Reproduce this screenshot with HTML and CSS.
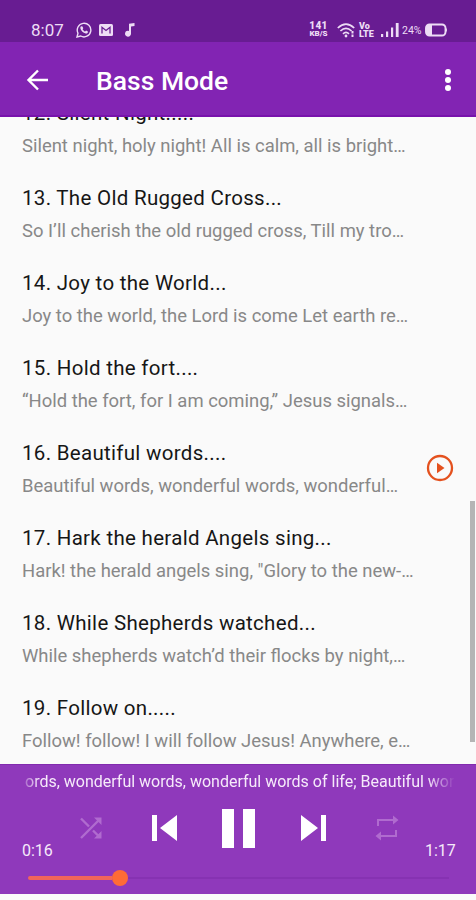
FILE: index.html
```html
<!DOCTYPE html>
<html lang="en">
<head>
<meta charset="utf-8">
<title>Bass Mode</title>
<link rel="stylesheet" href="styles.css">
</head>
<body>
<div class="screen">
  <header class="status">
    <span class="clock">8:07</span>
    <svg class="whatsapp" width="16" height="16" viewBox="0 0 16 16"><path d="M1 15l1-3.8A6.8 6.8 0 1 1 4.7 14z" fill="none" stroke="currentColor" stroke-width="1.4"/><path d="M5.2 4.3l1.3.1.8 1.8-.7 1c.6 1.1 1.3 1.8 2.5 2.3l1-.9 1.8.9c.2 1.5-1 2.2-2.1 2-2.7-.6-5.2-3-5.5-5.4 0-.7.4-1.5.9-1.8z" fill="currentColor"/></svg>
    <svg class="mail" width="14" height="12" viewBox="0 0 14 12"><rect width="14" height="12" rx="1.5" fill="currentColor"/><path d="M3 9.500V3.300L7 6.500l4-3.200v6.200" fill="none" stroke="#681c92" stroke-width="1.300"/></svg>
    <svg class="note" width="10" height="14" viewBox="0 0 10 14"><path d="M4 .8L9.500 0v3L6 3.500V10.500A3 3 0 1 1 4 7.900z" fill="currentColor"/></svg>
    <span class="spacer"></span>
    <span class="speed"><b>141</b><small>KB/S</small></span>
    <svg class="wifi" width="19" height="15" viewBox="0 0 19 15"><g fill="none" stroke="currentColor" stroke-width="1.700"><path d="M.8 5Q9-2.800 17.200 5M3.400 8Q9 2.600 14.600 8M6 10.800Q9 8 12 10.800"/></g><circle cx="9" cy="13" r="1.400" fill="currentColor"/><path d="M15.500 8v2.500M15.500 11.500v2.500" fill="none" stroke="currentColor" stroke-width="2"/></svg>
    <span class="volte"><b>Vo</b><small>LTE</small></span>
    <svg class="signal" width="18" height="14" viewBox="0 0 18 14" fill="currentColor"><path d="M0 11h2.200v3H0zM5 8.500h2.200V14H5zM10 4.500h2.200V14H10zM14.800 0h2.800v14h-2.800z"/></svg>
    <span class="percent">24%</span>
    <svg class="battery" width="23" height="14" viewBox="0 0 23 14"><rect x="1" y="1.500" width="19.500" height="11" rx="3.500" fill="none" stroke="currentColor" stroke-width="1.900"/><path d="M4 1.500h3v11H4Q1 12 1 7t3-5.500zM21 5q2 2 0 4z" fill="currentColor"/></svg>
  </header>
  <nav class="appbar">
    <svg class="back" width="23" height="22" viewBox="0 0 23 22"><path d="M12 1.500L2.500 11l9.500 9.500M2 11h20" fill="none" stroke="#fff" stroke-width="2.400"/></svg>
    <h1>Bass Mode</h1>
    <svg class="more" width="8" height="24" viewBox="0 0 8 24" fill="#fff"><circle cx="4" cy="4" r="3"/><circle cx="4" cy="12" r="3"/><circle cx="4" cy="20" r="3"/></svg>
  </nav>
  <main class="list">
    <article class="row"><h2>12. Silent Night.....</h2><p>Silent night, holy night! All is calm, all is bright…</p></article>
    <article class="row"><h2>13. The Old Rugged Cross...</h2><p>So I’ll cherish the old rugged cross, Till my tro…</p></article>
    <article class="row"><h2>14. Joy to the World...</h2><p>Joy to the world, the Lord is come Let earth re…</p></article>
    <article class="row"><h2>15. Hold the fort....</h2><p>“Hold the fort, for I am coming,” Jesus signals…</p></article>
    <article class="row playing"><h2>16. Beautiful words....</h2><p>Beautiful words, wonderful words, wonderful…</p>
      <svg class="now" width="28" height="28" viewBox="0 0 28 28"><circle cx="14" cy="14" r="12" fill="none" stroke="#e4511e" stroke-width="2.300"/><path d="M11 8.800v10.400l7.500-5.200z" fill="#e4511e"/></svg>
    </article>
    <article class="row"><h2>17. Hark the herald Angels sing...</h2><p>Hark! the herald angels sing, "Glory to the new-…</p></article>
    <article class="row"><h2>18. While Shepherds watched...</h2><p>While shepherds watch’d their flocks by night,…</p></article>
    <article class="row"><h2>19. Follow on.....</h2><p>Follow! follow! I will follow Jesus! Anywhere, e…</p></article>
    <div class="scrollbar"></div>
  </main>
  <footer class="player">
    <div class="lyrics"><span>ords, wonderful words, wonderful words of life; Beautiful words</span></div>
    <div class="controls">
      <time>0:16</time>
      <svg class="shuffle" width="24" height="24" viewBox="0 0 24 24"><path d="M2 2.500l8 8M2 22L19.500 4.500M14 14.500l5.500 5.500" fill="none" stroke="#b06bcf" stroke-width="2.400"/><path d="M15 1.500h7.500V9zM22.500 15v7.500H15z" fill="#b06bcf"/></svg>
      <svg class="prev" width="26" height="26" viewBox="0 0 26 26" fill="#fff"><path d="M0 0h5v26H0zM25 0v26L8 13z"/></svg>
      <svg class="pause" width="33" height="39" viewBox="0 0 33 39" fill="#fff"><path d="M0 0h12v39H0zM21 0h12v39H21z"/></svg>
      <svg class="next" width="26" height="26" viewBox="0 0 26 26" fill="#fff"><path d="M0 0v26l17-13zM20 0h5v26h-5z"/></svg>
      <svg class="repeat" width="24" height="26" viewBox="0 0 24 26"><path d="M3 11V5h15M21 15v6H6" fill="none" stroke="#b06bcf" stroke-width="2"/><path d="M18 .500L23.500 5l-5.500 4.500zM6 16.500L.500 21l5.500 4.500z" fill="#b06bcf"/></svg>
      <time>1:17</time>
    </div>
    <div class="seek"><div class="done"></div><div class="thumb"></div><div class="rest"></div></div>
  </footer>
</div>
</body>
</html>
```
FILE: styles.css
```css
* { box-sizing: border-box; }
body { margin: 0; font-family: Roboto, "Liberation Sans", sans-serif; background: #fafafa; }
svg { display: block; flex: none; }
h1, h2, p { margin: 0; white-space: nowrap; }
.screen { width: 476px; height: 900px; overflow: hidden; display: flex; flex-direction: column; }

.status { height: 42px; flex: none; background: #681c92; color: #eddcf5; display: flex; align-items: center; padding: 18px 28px 0 31px; }
.clock { font-size: 17px; width: 45px; letter-spacing: 0; }
.mail { margin-left: 7px; }
.note { margin-left: 12px; }
.spacer { flex: 1; }
.speed, .volte { display: flex; flex-direction: column; align-items: center; font-weight: 900; }
.speed { width: 19px; margin-right: 9px; }
.speed b { font-size: 10px; line-height: 8px; font-weight: 900; letter-spacing: .3px; }
.speed small { font-size: 8px; line-height: 8px; }
.volte { width: 15px; margin: 0 7px 0 3px; align-items: flex-start; }
.volte b, .volte small { font-size: 9px; line-height: 8px; font-weight: 900; }
.percent { font-size: 10.5px; margin: 0 2px 0 3px; width: 21px; }

.appbar { height: 75px; flex: none; background: #8224b3; border-bottom: 2px solid #7812ac; display: flex; align-items: center; padding: 2px 24px 0 26px; }
.appbar h1 { color: #fff; font-size: 26.5px; font-weight: 500; line-height: 32px; margin: 2px 0 0 47px; flex: 1; }

.list { flex: 1; min-height: 0; overflow: hidden; position: relative; }
.row { height: 84.95px; color: #161616; position: relative; padding-left: 22px; }
.row:first-child { margin-top: -17.6px; }
.row h2 { font-size: 20.5px; font-weight: 400; line-height: 28px; letter-spacing: .3px; }
.row p { font-size: 18.45px; line-height: 26px; color: #888; margin-top: 6px; }
.now { position: absolute; left: 426px; top: 15px; }
.scrollbar { position: absolute; right: 1px; top: 384px; width: 5px; height: 241px; background: #b5b5b5; }

.player { height: 130px; flex: none; margin-bottom: 6px; background: #8f39bb; border-top: 1px solid #822bae; color: #f6eafa; padding: 4px 20px 0 22px; }
.lyrics { height: 25px; line-height: 25px; font-size: 16px; margin: 0 1px 0 3px; overflow: hidden; white-space: nowrap; mask-image: linear-gradient(90deg, rgba(0,0,0,.3), #000 14px, #000 calc(100% - 28px), transparent); }
.controls { display: flex; height: 68px; align-items: center; }
.controls time { font-size: 16px; line-height: 20px; width: 31px; align-self: flex-end; margin-bottom: 1px; }
.controls time:last-child { margin-left: auto; }
.shuffle { margin-left: 26px; }
.prev { margin-left: 49px; }
.pause { margin-left: 44px; }
.next { margin-left: 46px; }
.repeat { margin-left: 48px; }
.seek { display: flex; align-items: center; height: 16px; margin: 8px 7px 0 6px; }
.done { width: 84px; height: 4px; background: #f1655b; border-radius: 2px 0 0 2px; }
.thumb { width: 16px; height: 16px; border-radius: 50%; background: #ff6b36; }
.rest { flex: 1; height: 2px; background: #8632b2; }
```
